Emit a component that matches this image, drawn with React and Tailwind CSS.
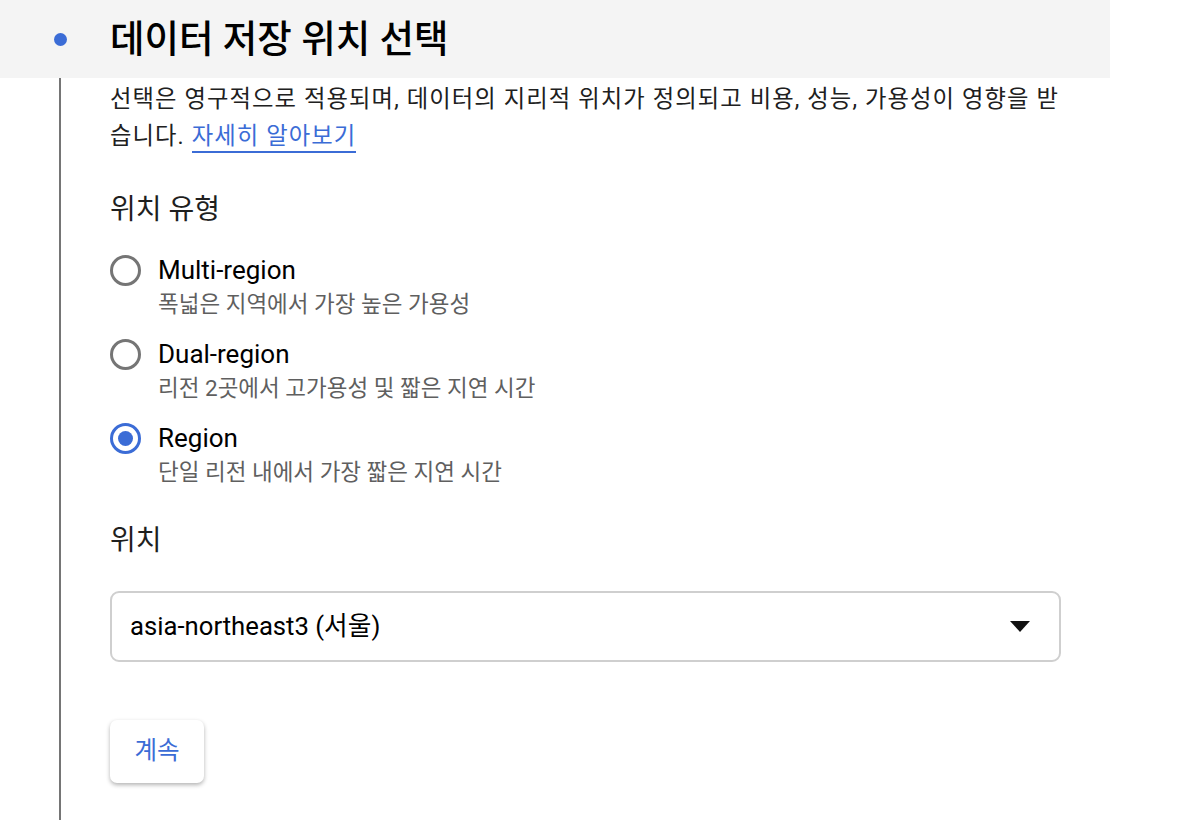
export default function App() {
  const font = { fontFamily: 'Roboto, "Noto Sans CJK KR", sans-serif' };
  const options = [
    { label: "Multi-region", sub: "폭넓은 지역에서 가장 높은 가용성", checked: false },
    { label: "Dual-region", sub: "리전 2곳에서 고가용성 및 짧은 지연 시간", checked: false },
    { label: "Region", sub: "단일 리전 내에서 가장 짧은 지연 시간", checked: true },
  ];
  return (
    <div className="w-[1192px] h-[820px] bg-white overflow-hidden text-[#1f1f1f]" style={font}>
      <div className="w-[1110px] h-[78px] bg-[#f4f4f4] flex items-center">
        <div className="w-[120px] flex justify-center">
          <div className="w-[13px] h-[13px] rounded-full bg-[#3b6cd6]" />
        </div>
        <div className="-ml-[10px] text-[37.5px] font-medium text-black leading-[44px]">데이터 저장 위치 선택</div>
      </div>
      <div className="flex">
        <div className="w-[61px] shrink-0 flex justify-end">
          <div className="w-[2px] h-[742px] bg-[#757575]" />
        </div>
        <div className="pl-[49px] w-[1020px]">
          <p className="mt-[3px] text-[23.3px] tracking-[1.1px] leading-[37px] text-[#202020] w-[951px]">
            선택은 영구적으로 적용되며, 데이터의 지리적 위치가 정의되고 비용, 성능, 가용성이 영향을 받습니다.{" "}
            <a className="text-[#3b6cd6] border-b-2 border-[#3b6cd6] pb-[1px]">자세히 알아보기</a>
          </p>
          <div className="mt-[37px] text-[28px] leading-[36px]">위치 유형</div>
          <div className="mt-[25px] flex flex-col gap-[16px]">
            {options.map((o) => (
              <div key={o.label} className="flex h-[68px]">
                <div className="w-[48px] pt-[1.5px]">
                  {o.checked ? (
                    <div className="w-[31px] h-[31px] rounded-full border-[3px] border-[#3b6cd6] flex items-center justify-center">
                      <div className="w-[15px] h-[15px] rounded-full bg-[#3b6cd6]" />
                    </div>
                  ) : (
                    <div className="w-[31px] h-[31px] rounded-full border-[3px] border-[#757575]" />
                  )}
                </div>
                <div>
                  <div className="text-[26px] leading-[34px] text-black">{o.label}</div>
                  <div className="text-[22.5px] leading-[34px] text-[#5f5f5f]">{o.sub}</div>
                </div>
              </div>
            ))}
          </div>
          <div className="mt-[34px] text-[28px] leading-[36px]">위치</div>
          <div className="mt-[32px] w-[951px] h-[71px] border-2 border-[#cfcfcf] rounded-[9px] flex items-center justify-between pl-[18px] pr-[29px]">
            <span className="text-[25.7px] text-black">asia-northeast3 (서울)</span>
            <svg width="20" height="11" viewBox="0 0 20 11">
              <path d="M0 0 L20 0 L10 11 Z" fill="#111" />
            </svg>
          </div>
          <button className="mt-[58px] w-[94px] h-[63px] rounded-[7px] bg-white shadow-[0_2px_4px_rgba(0,0,0,0.3)] text-[24.5px] text-[#3b6cd6]">
            계속
          </button>
        </div>
      </div>
    </div>
  );
}
